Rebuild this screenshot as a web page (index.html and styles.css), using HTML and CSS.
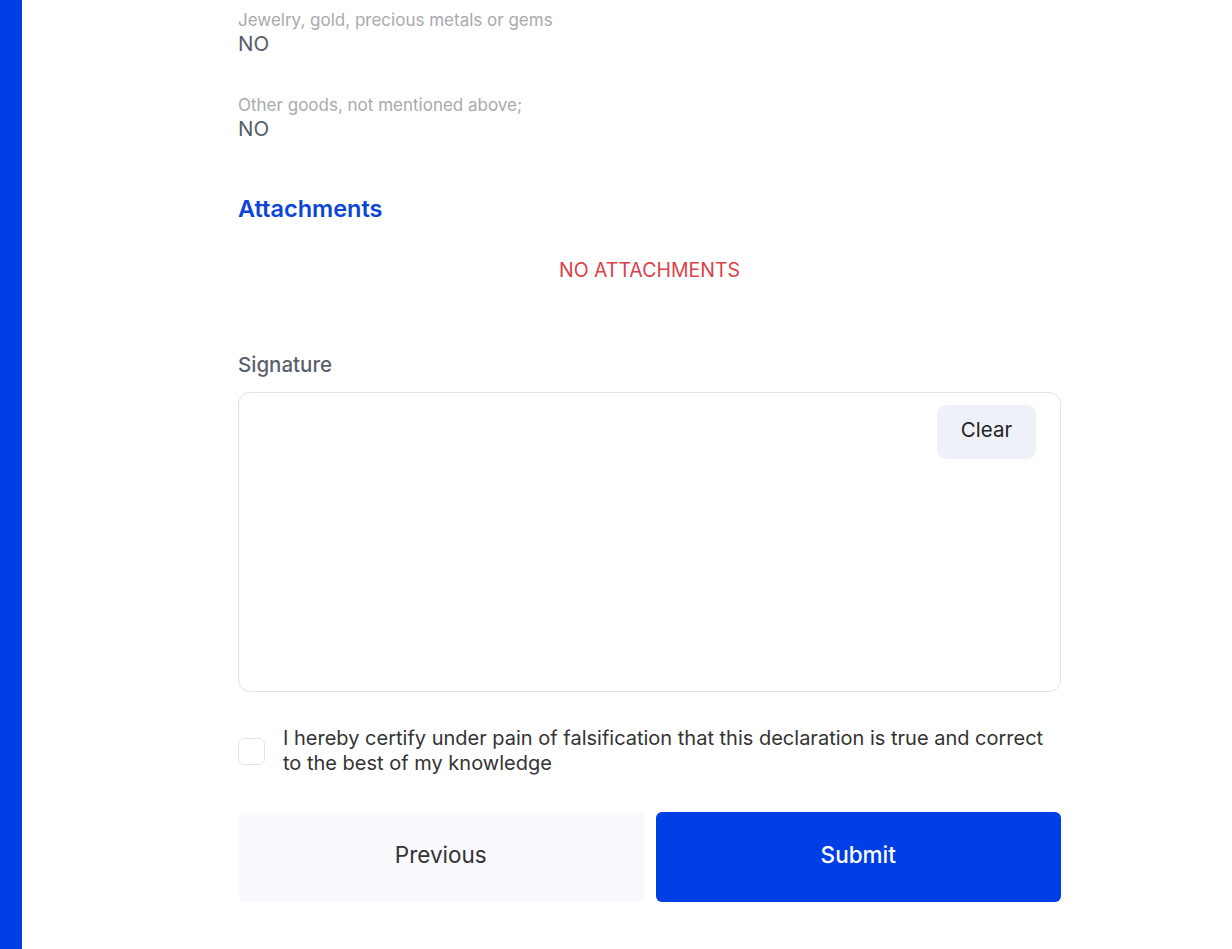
FILE: index.html
```html
<!DOCTYPE html>
<html>
<head>
<meta charset="utf-8">
<link rel="stylesheet" href="styles.css">
</head>
<body>
<div class="page">
  <aside class="sidebar"></aside>
  <main class="main">
    <div class="content">
      <div class="field">
        <div class="field-label">Jewelry, gold, precious metals or gems</div>
        <div class="field-value">NO</div>
      </div>
      <div class="field">
        <div class="field-label">Other goods, not mentioned above;</div>
        <div class="field-value">NO</div>
      </div>
      <h2 class="section-title">Attachments</h2>
      <div class="empty">NO ATTACHMENTS</div>
      <div class="sig-label">Signature</div>
      <div class="sig-box">
        <button class="clear-btn">Clear</button>
      </div>
      <label class="certify">
        <span class="checkbox"></span>
        <span class="certify-text">I hereby certify under pain of falsification that this declaration is true and correct to the best of my knowledge</span>
      </label>
      <div class="actions">
        <button class="btn btn-prev">Previous</button>
        <button class="btn btn-submit">Submit</button>
      </div>
    </div>
  </main>
</div>
</body>
</html>
```
FILE: styles.css
```css
* { box-sizing: border-box; }
html, body { margin: 0; padding: 0; background: #fff; }
body { font-family: Inter, "Liberation Sans", sans-serif; }
.page { display: flex; min-height: 949px; }
.sidebar { width: 22px; background: #003ee6; flex: none; }
.main { flex: 1; padding-left: 216px; }
.content { width: 823px; display: flex; flex-direction: column; padding-top: 10px; }
.field { display: flex; flex-direction: column; margin-bottom: 39px; }
.field-label { font-size: 17px; color: #a8aaad; line-height: 21px; }
.field-value { font-size: 20.5px; color: #565c67; line-height: 25px; }
.section-title { margin: 15px 0 0; font-size: 23.5px; font-weight: 600; color: #0b45d6; line-height: 28px; }
.empty { text-align: center; color: #d9424a; font-size: 19.5px; line-height: 24px; margin-top: 35px; }
.sig-label { margin-top: 70px; font-size: 20.5px; font-weight: 500; color: #5b616c; line-height: 26px; }
.sig-box { margin-top: 14px; height: 300px; border: 1px solid #e1e2e5; border-radius: 12px; display: flex; justify-content: flex-end; align-items: flex-start; padding: 12px 24px 0 0; }
.clear-btn { width: 99px; height: 54px; border: none; border-radius: 9px; background: #eef2f8; font-family: inherit; font-size: 20.5px; color: #222; padding: 0 0 5px; }
.certify { margin-top: 34px; display: flex; align-items: center; gap: 18px; }
.checkbox { width: 27px; height: 27px; border: 1px solid #e2e3e6; border-radius: 6px; flex: none; }
.certify-text { font-size: 20px; line-height: 25px; color: #333; }
.actions { margin-top: 36px; display: flex; gap: 12px; }
.btn { flex: 1; height: 90px; border: none; border-radius: 6px; font-family: inherit; font-size: 22.5px; padding: 0 0 5px; }
.btn-prev { background: #f9f9fe; color: #333; }
.btn-submit { background: #003ee6; color: #fff; font-weight: 500; }
```
